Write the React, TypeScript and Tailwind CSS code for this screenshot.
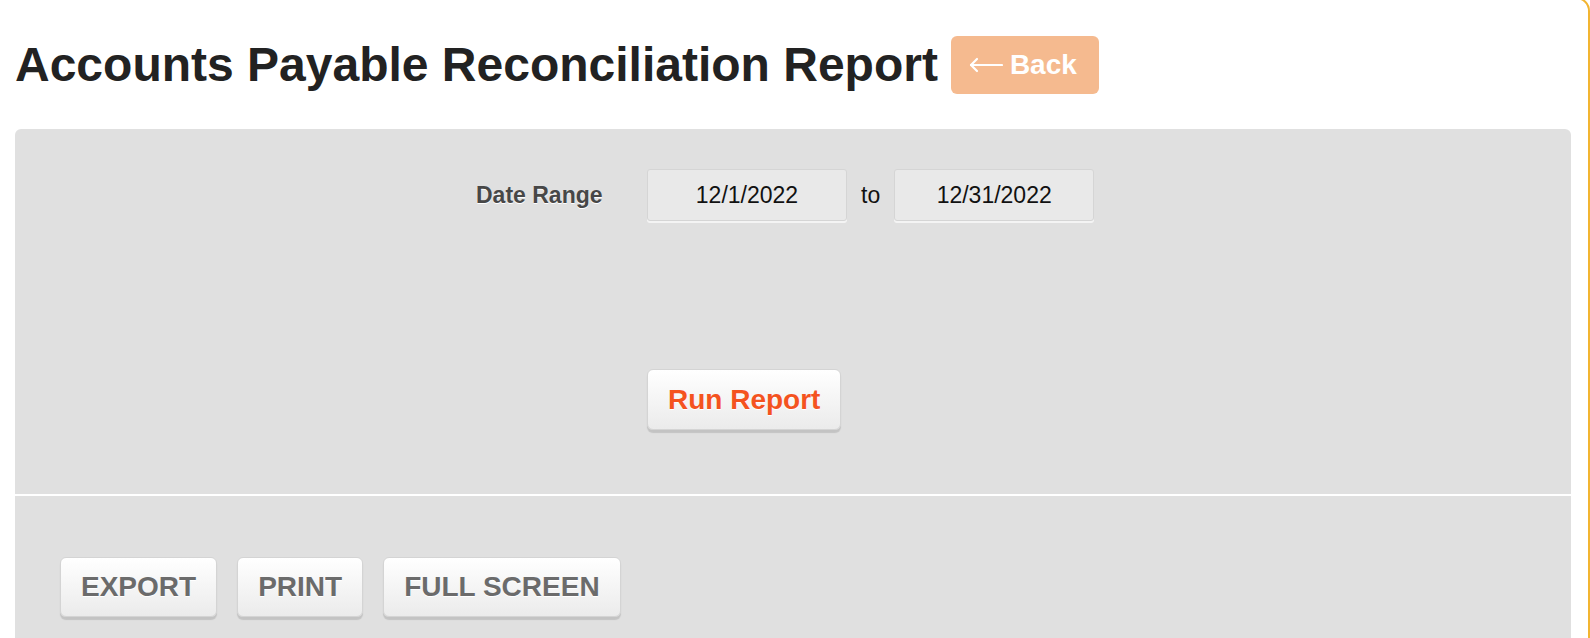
export default function App() {
  const tools = ["EXPORT", "PRINT", "FULL SCREEN"];

  return (
    <div className="h-[638px] overflow-hidden bg-white font-['Liberation_Sans',Arial,sans-serif]">
      <div className="-ml-[12px] -mt-[3px] w-[1602px] h-[700px] border-2 border-[#f2b531] rounded-[14px] pl-[25px] pr-[17px] pt-[37px]">
        {/* Header */}
        <div className="flex items-center gap-[13px] h-[58px]">
          <h1 className="text-[48px] leading-none font-bold text-[#222222]">
            Accounts Payable Reconciliation Report
          </h1>
          <button
            type="button"
            className="h-[58px] pl-[18px] pr-[22px] rounded-[6px] bg-[#f5ba8f] text-white text-[28px] font-bold leading-none flex items-center gap-[7px]"
          >
            <svg width="34" height="16" viewBox="0 0 34 16" fill="none" stroke="currentColor" strokeWidth="2.2" strokeLinecap="round" strokeLinejoin="round">
              <path d="M2 8h31" />
              <path d="M8 2L2 8l6 6" />
            </svg>
            Back
          </button>
        </div>

        {/* Filters panel */}
        <div className="mt-[35px] bg-[#e0e0e0] rounded-t-[6px] h-[600px]">
          <div className="pt-[40px] pl-[461px] pb-[64px] border-b-2 border-white">
            <div className="flex items-center">
              <label className="w-[171px] text-[23px] font-bold text-[#474747] [text-shadow:0_1px_0_#ffffff]">
                Date Range
              </label>
              <input
                type="text"
                defaultValue="12/1/2022"
                className="w-[200px] h-[52px] bg-[#e9e9e9] border border-[#d5d5d5] rounded-[3px] shadow-[0_2px_0_#f4f4f4] text-center text-[23px] text-[#111111] focus:outline-none"
              />
              <span className="mx-[14px] text-[23px] text-[#111111]">to</span>
              <input
                type="text"
                defaultValue="12/31/2022"
                className="w-[200px] h-[52px] bg-[#e9e9e9] border border-[#d5d5d5] rounded-[3px] shadow-[0_2px_0_#f4f4f4] text-center text-[23px] text-[#111111] focus:outline-none"
              />
            </div>
            <div className="mt-[148px] ml-[171px]">
              <button
                type="button"
                className="h-[61px] px-5 rounded-[6px] border border-[#d4d4d4] bg-linear-to-b from-white to-[#ebebeb] shadow-[0_3px_1px_rgba(0,0,0,0.13)] text-[28px] font-bold text-[#f4531f] [text-shadow:0_1px_0_#ffffff]"
              >
                Run Report
              </button>
            </div>
          </div>

          {/* Toolbar */}
          <div className="pt-[61px] pl-[45px] flex gap-[20px]">
            {tools.map((t) => (
              <button
                key={t}
                type="button"
                className="h-[60px] px-5 rounded-[6px] border border-[#d4d4d4] bg-linear-to-b from-white to-[#ebebeb] shadow-[0_3px_1px_rgba(0,0,0,0.13)] text-[28px] font-bold text-[#6b6b6b] [text-shadow:0_1px_0_#ffffff]"
              >
                {t}
              </button>
            ))}
          </div>
        </div>
      </div>
    </div>
  );
}
